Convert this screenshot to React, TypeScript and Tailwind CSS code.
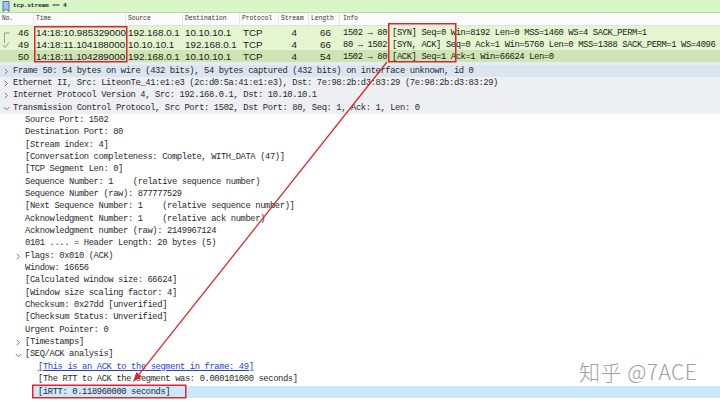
import React from "react";

const MONO = "font-['Liberation_Mono','DejaVu_Sans_Mono',monospace] text-[8.8px] tracking-[-0.38px]";
const SANS = "font-['Liberation_Sans',Arial,sans-serif] text-[9.8px]";

type Pkt = { no: string; time: string; src: string; dst: string; len: string; info: string; mark: "start" | "ack" | "none"; dark?: boolean };

const pkts: Pkt[] = [
  { no: "46", time: "14:18:10.985329000", src: "192.168.0.1", dst: "10.10.10.1", len: "66", info: "1502 → 80 [SYN] Seq=0 Win=8192 Len=0 MSS=1460 WS=4 SACK_PERM=1", mark: "start" },
  { no: "49", time: "14:18:11.104188000", src: "10.10.10.1", dst: "192.168.0.1", len: "66", info: "80 → 1502 [SYN, ACK] Seq=0 Ack=1 Win=5760 Len=0 MSS=1388 SACK_PERM=1 WS=4096", mark: "ack" },
  { no: "50", time: "14:18:11.104289000", src: "192.168.0.1", dst: "10.10.10.1", len: "54", info: "1502 → 80 [ACK] Seq=1 Ack=1 Win=66624 Len=0", mark: "none", dark: true },
];

type TRow = { level: 0 | 1 | 2; text: string; chev?: "open" | "closed"; bg?: "sel" | "hdr"; link?: boolean; hl?: boolean };

const tree: TRow[] = [
  { level: 0, chev: "closed", bg: "sel", text: "Frame 50: 54 bytes on wire (432 bits), 54 bytes captured (432 bits) on interface unknown, id 0" },
  { level: 0, chev: "closed", bg: "hdr", text: "Ethernet II, Src: LiteonTe_41:e1:e3 (2c:d0:5a:41:e1:e3), Dst: 7e:98:2b:d3:83:29 (7e:98:2b:d3:83:29)" },
  { level: 0, chev: "closed", bg: "hdr", text: "Internet Protocol Version 4, Src: 192.168.0.1, Dst: 10.10.10.1" },
  { level: 0, chev: "open", bg: "hdr", text: "Transmission Control Protocol, Src Port: 1502, Dst Port: 80, Seq: 1, Ack: 1, Len: 0" },
  { level: 1, text: "Source Port: 1502" },
  { level: 1, text: "Destination Port: 80" },
  { level: 1, text: "[Stream index: 4]" },
  { level: 1, text: "[Conversation completeness: Complete, WITH_DATA (47)]" },
  { level: 1, text: "[TCP Segment Len: 0]" },
  { level: 1, text: "Sequence Number: 1    (relative sequence number)" },
  { level: 1, text: "Sequence Number (raw): 877777529" },
  { level: 1, text: "[Next Sequence Number: 1    (relative sequence number)]" },
  { level: 1, text: "Acknowledgment Number: 1    (relative ack number)" },
  { level: 1, text: "Acknowledgment number (raw): 2149967124" },
  { level: 1, text: "0101 .... = Header Length: 20 bytes (5)" },
  { level: 1, chev: "closed", text: "Flags: 0x010 (ACK)" },
  { level: 1, text: "Window: 16656" },
  { level: 1, text: "[Calculated window size: 66624]" },
  { level: 1, text: "[Window size scaling factor: 4]" },
  { level: 1, text: "Checksum: 0x27dd [unverified]" },
  { level: 1, text: "[Checksum Status: Unverified]" },
  { level: 1, text: "Urgent Pointer: 0" },
  { level: 1, chev: "closed", text: "[Timestamps]" },
  { level: 1, chev: "open", text: "[SEQ/ACK analysis]" },
  { level: 2, link: true, text: "[This is an ACK to the segment in frame: 49]" },
  { level: 2, text: "[The RTT to ACK the segment was: 0.000101000 seconds]" },
  { level: 2, hl: true, text: "[iRTT: 0.118960000 seconds]" },
];

function Chev({ open }: { open: boolean }) {
  return open ? (
    <svg width="7" height="7" viewBox="0 0 7 7" className="block">
      <path d="M0.8 2 L3.5 4.8 L6.2 2" fill="none" stroke="#7a7a7a" strokeWidth="1" />
    </svg>
  ) : (
    <svg width="7" height="7" viewBox="0 0 7 7" className="block">
      <path d="M1.8 0.8 L4.4 3.5 L1.8 6.2" fill="none" stroke="#7a7a7a" strokeWidth="1" />
    </svg>
  );
}

function Mark({ kind }: { kind: Pkt["mark"] }) {
  if (kind === "start")
    return (
      <svg width="10" height="12" viewBox="0 0 10 12" className="block">
        <path d="M3.5 6 L8.5 6 M3.5 6 L3.5 12" fill="none" stroke="#9a9a9a" strokeWidth="1" />
      </svg>
    );
  if (kind === "ack")
    return (
      <svg width="10" height="12" viewBox="0 0 10 12" className="block">
        <path d="M3.5 0 L3.5 4 M2 6 L4 8.5 L8 3.5" fill="none" stroke="#9a9a9a" strokeWidth="1" />
      </svg>
    );
  return <span className="block w-[10px]" />;
}

export default function App() {
  const dir = { x: -0.6206, y: 0.7843 };
  const tip = { x: 133, y: 382 };
  const base = { x: tip.x - 10 * dir.x, y: tip.y - 10 * dir.y };
  const p1 = { x: base.x + 3.6 * dir.y, y: base.y - 3.6 * dir.x };
  const p2 = { x: base.x - 3.6 * dir.y, y: base.y + 3.6 * dir.x };
  const red = "#d8282a";

  return (
    <div className="relative w-[720px] h-[402px] overflow-hidden bg-white text-[#1a1a1a]">
      {/* filter bar */}
      <div className="h-[13px] flex items-center bg-[#d8f6c7] border-b border-[#b7d9a6]">
        <svg width="8" height="11" viewBox="0 0 8 11" className="ml-[2px] block">
          <path d="M1 0.5 H7 V10.5 L4 8 L1 10.5 Z" fill="#a9c1ec" stroke="#4f74b8" strokeWidth="1" />
        </svg>
        <span className="ml-[3px] font-['Liberation_Mono',monospace] text-[6.2px] font-bold tracking-[-0.15px] text-[#222]">tcp.stream == 4</span>
      </div>

      {/* header */}
      <div className="h-[13px] grid grid-cols-[34px_92px_57px_57px_39px_30px_31px_1fr] items-center bg-[#fbfbfb] border-b border-[#e2e2e2] font-['Liberation_Mono',monospace] text-[6.3px] text-[#333]">
        <div className="pl-[2px] border-r border-[#e6e6e6] h-full flex items-center">No.</div>
        <div className="pl-[2px] border-r border-[#e6e6e6] h-full flex items-center">Time</div>
        <div className="pl-[2px] border-r border-[#e6e6e6] h-full flex items-center">Source</div>
        <div className="pl-[2px] border-r border-[#e6e6e6] h-full flex items-center">Destination</div>
        <div className="pl-[2px] border-r border-[#e6e6e6] h-full flex items-center">Protocol</div>
        <div className="pl-[2px] border-r border-[#e6e6e6] h-full flex items-center">Stream</div>
        <div className="pl-[2px] border-r border-[#e6e6e6] h-full flex items-center">Length</div>
        <div className="pl-[3px] h-full flex items-center">Info</div>
      </div>

      {/* packets */}
      {pkts.map((p) => (
        <div
          key={p.no}
          className={
            p.dark
              ? "h-[12px] grid grid-cols-[34px_92px_57px_57px_39px_30px_31px_1fr] items-center bg-[#cfe4b4] whitespace-pre"
              : "h-[12px] grid grid-cols-[34px_92px_57px_57px_39px_30px_31px_1fr] items-center bg-[#e4f5d0] whitespace-pre"
          }
        >
          <div className={`flex items-center ${SANS}`}>
            <span className="ml-[1px]"><Mark kind={p.mark} /></span>
            <span className="ml-auto pr-[5px]">{p.no}</span>
          </div>
          <div className={`pl-[2px] ${SANS}`}>{p.time}</div>
          <div className={`pl-[2px] ${SANS}`}>{p.src}</div>
          <div className={`pl-[2px] ${SANS}`}>{p.dst}</div>
          <div className={`pl-[3px] ${SANS}`}>TCP</div>
          <div className={`text-right pr-[12px] ${SANS}`}>4</div>
          <div className={`text-right pr-[9px] ${SANS}`}>{p.len}</div>
          <div className={`pl-[3px] overflow-hidden ${MONO}`}>{p.info}</div>
        </div>
      ))}

      {/* separator */}
      <div className="h-[3px] bg-[#e6ebf1]" />

      {/* detail tree */}
      <div className={`${MONO} text-[#2a2a2a]`}>
        {tree.map((r, i) => {
          const rowBg = r.bg === "sel" ? "bg-[#dbe5f0]" : r.bg === "hdr" ? "bg-[#edeff2]" : "";
          const pad = r.level === 0 ? "pl-[3px]" : r.level === 1 ? "pl-[15px]" : "pl-[33px]";
          return (
            <div key={i} className={`h-[12.35px] flex items-center whitespace-pre ${rowBg} ${pad}`}>
              <div className={r.hl ? "flex-1 h-full flex items-center bg-[#cde8fd]" : "flex-1 h-full flex items-center"}>
                {r.level === 2 ? (
                  <span className="w-[5px]" />
                ) : (
                  <span className="w-[10px] flex items-center">{r.chev ? <Chev open={r.chev === "open"} /> : null}</span>
                )}
                {r.link ? (
                  <span className="text-[#2b3fc9] underline decoration-[#2b3fc9]">{r.text}</span>
                ) : (
                  <span>{r.text}</span>
                )}
              </div>
            </div>
          );
        })}
      </div>

      {/* annotations: red boxes and arrow */}
      <svg className="absolute left-0 top-0 pointer-events-none" width="720" height="402" viewBox="0 0 720 402">
        <rect x="34.75" y="26.75" width="92" height="35" fill="none" stroke={red} strokeWidth="1.5" />
        <rect x="388.75" y="23.75" width="67" height="38" fill="none" stroke={red} strokeWidth="1.5" />
        <rect x="32.75" y="385.25" width="153" height="12.5" fill="none" stroke={red} strokeWidth="1.5" />
        <line x1="387" y1="62" x2={base.x} y2={base.y} stroke={red} strokeWidth="1.3" />
        <polygon points={`${tip.x},${tip.y} ${p1.x},${p1.y} ${p2.x},${p2.y}`} fill={red} />
      </svg>

      {/* watermark */}
      <div className="absolute left-[579px] top-[359px] font-['Noto_Sans_CJK_SC','Noto_Sans',sans-serif] font-light text-[21px] leading-[24px] tracking-[0.5px] text-[#a0a0a0] [text-shadow:0_0_1px_#ffffff,1px_1px_0_#ffffff] whitespace-pre">
        知乎 @7ACE
      </div>
    </div>
  );
}
